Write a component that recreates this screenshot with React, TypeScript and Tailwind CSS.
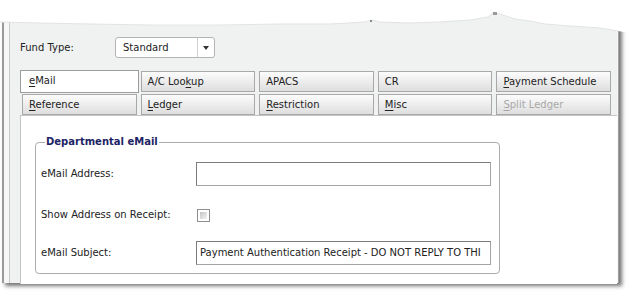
import React from "react";

type TabProps = { label: string; u?: number; selected?: boolean; disabled?: boolean };

const Tab = ({ label, u, selected, disabled }: TabProps) => {
  const text =
    u === undefined ? (
      label
    ) : (
      <>
        {label.slice(0, u)}
        <span className="underline underline-offset-2">{label[u]}</span>
        {label.slice(u + 1)}
      </>
    );
  return (
    <div
      className={
        selected
          ? "h-[23px] -mt-[1px] -mx-[2px] -mb-[1px] pl-[8px] pt-[3px] border border-[#9c9c9c] bg-white text-[#222]"
          : "h-[21px] pl-[6px] pt-[3px] border border-[#a8a8a8] bg-linear-to-b from-[#fcfcfc] to-[#dedede] " +
            (disabled ? "text-[#a8a8a8]" : "text-[#222]")
      }
    >
      {text}
    </div>
  );
};

const App = () => {
  return (
    <div className="relative w-[635px] h-[298px] bg-white overflow-hidden pt-[10px] pl-[2px] font-['DejaVu_Sans',sans-serif] text-[10px] leading-[14px]">
      {/* torn top edge */}
      <svg className="absolute left-0 top-0" width="635" height="40" viewBox="0 0 635 40">
        <path
          d="M0 0 H635 V34 L618 31 L600 28 L570 26 L545 24 L530 21 L515 19 L500 14 L493 13 L488 17 L470 20 L440 22 L410 23 L380 22 L372 20 L365 22 L330 24 L280 24 L220 25 L150 25 L90 24 L40 23 L0 22 Z"
          fill="#ffffff"
        />
        <path
          d="M618 31 L600 28 L570 26 L545 24 L530 21 L515 19 L500 14 L493 13 L488 17 L470 20 L440 22 L410 23 L380 22 L372 20 L365 22 L330 24 L280 24 L220 25 L150 25 L90 24 L40 23 L0 22"
          fill="none"
          stroke="#e2e4e4"
          strokeWidth="1"
        />
        <rect x="493" y="12" width="4" height="3" fill="#9a9a9a" />
        <rect x="370" y="20" width="2" height="2" fill="#8a8a8a" />
      </svg>

      <div className="w-[617px] h-[273px] border-l-2 border-[#9a9a9a] bg-[#f7f7f7] pl-[5px] border-r border-r-[#a0a0a0] pr-[1px] shadow-[3px_3px_4px_rgba(0,0,0,0.55)]">
        <div className="h-full border-l border-[#c9c9c9] bg-[#f0f1f1] pt-[27px]">
          <div className="flex items-center pl-[10px]">
            <span className="w-[95px] text-[#222]">Fund Type:</span>
            <div className="flex h-[21px] w-[100px] rounded-[3px] border border-[#b4b4b4] bg-white">
              <div className="flex-1 pl-[7px] pt-[3px] text-[#222]">Standard</div>
              <div className="w-[17px] border-l border-[#d0d0d0] flex items-center justify-center">
                <svg width="6" height="4" viewBox="0 0 6 4">
                  <path d="M0 0 H6 L3 4 Z" fill="#333" />
                </svg>
              </div>
            </div>
          </div>

          <div className="ml-[12px] mt-[13px] mr-[6px] grid grid-cols-5 gap-x-[4px] gap-y-[2px]">
            <Tab label="eMail" u={0} selected />
            <Tab label="A/C Lookup" u={7} />
            <Tab label="APACS" />
            <Tab label="CR" />
            <Tab label="Payment Schedule" u={0} />
            <Tab label="Reference" u={0} />
            <Tab label="Ledger" u={0} />
            <Tab label="Restriction" u={0} />
            <Tab label="Misc" u={0} />
            <Tab label="Split Ledger" u={0} disabled />
          </div>

          <div className="ml-[10px] h-[169px] border-t border-l border-[#c4c4c4] bg-white pt-[19px] pl-[14px]">
            <fieldset className="w-[465px] h-[139px] rounded-[4px] border border-[#acacac] pl-[5px] pr-[8px]">
              <legend className="ml-[4px] px-[1px] font-bold text-[#1d2466]">Departmental eMail</legend>
              <div className="flex items-center mt-[13px] h-[24px]">
                <span className="w-[155px] text-[#222]">eMail Address:</span>
                <div className="h-[24px] w-[295px] border border-[#a4a4a4] border-t-[#7c7c7c] border-l-[#7c7c7c] bg-white" />
              </div>
              <div className="flex items-center mt-[22px] h-[14px]">
                <span className="w-[156px] text-[#222]">Show Address on Receipt:</span>
                <div className="h-[13px] w-[13px] border border-[#8e8e8e] p-[2px] bg-white">
                  <div className="h-full w-full bg-linear-to-br from-[#c4c4c4] to-[#f4f4f4]" />
                </div>
              </div>
              <div className="flex items-center mt-[19px] h-[24px]">
                <span className="w-[155px] text-[#222]">eMail Subject:</span>
                <div className="h-[24px] w-[295px] border border-[#a4a4a4] border-t-[#7c7c7c] border-l-[#7c7c7c] bg-white pl-[3px] pt-[4px] whitespace-nowrap overflow-hidden text-[#222]">
                  Payment Authentication Receipt - DO NOT REPLY TO THI
                </div>
              </div>
            </fieldset>
          </div>
        </div>
      </div>
    </div>
  );
};

export default App;
